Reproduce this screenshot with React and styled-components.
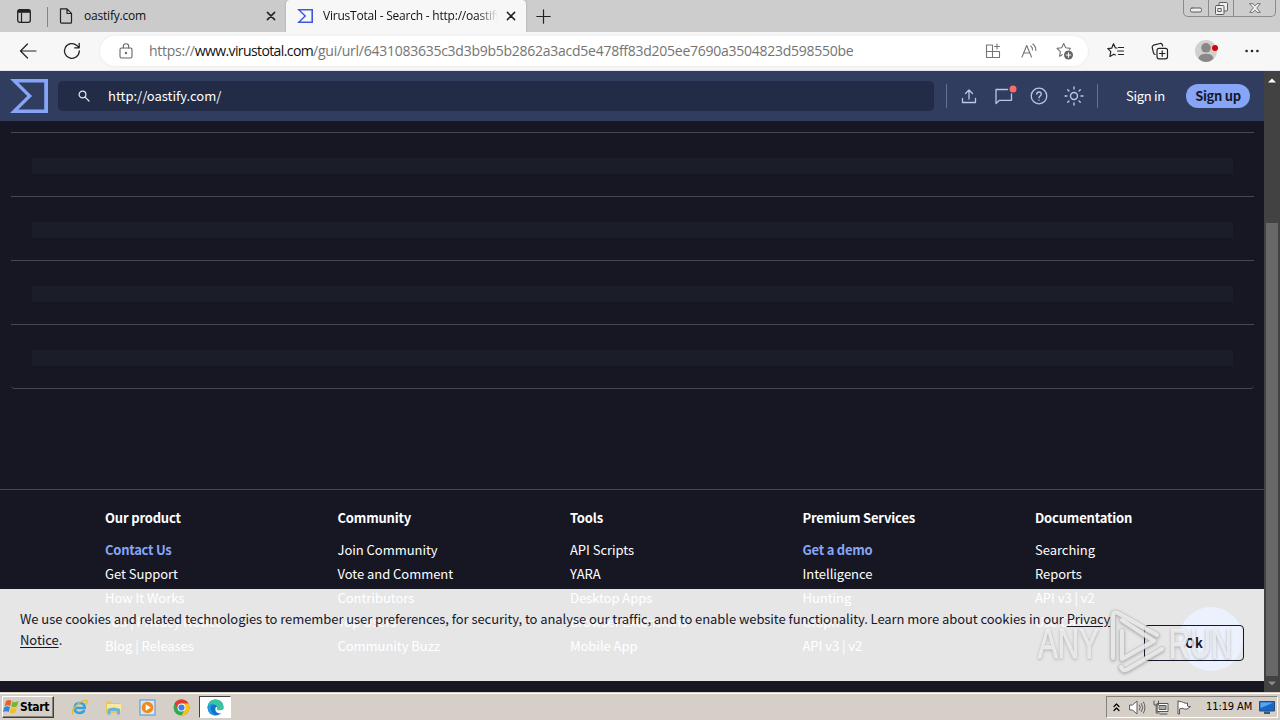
import React from 'react';
import styled, { createGlobalStyle } from 'styled-components';

const uiFont = "'Open Sans', 'Noto Sans', sans-serif";
const pageFont = "'Noto Sans CJK SC', 'Open Sans', sans-serif";
const systemFont = "'DejaVu Sans Condensed', 'DejaVu Sans', sans-serif";

const GlobalStyle = createGlobalStyle`
  * {
    box-sizing: border-box;
  }

  body {
    margin: 0;
    overflow: hidden;
    background-color: #161723;
  }

  svg {
    display: block;
    flex: none;
    overflow: visible;
  }
`;

const Screen = styled.div`
  width: 1280px;
  height: 720px;
  display: flex;
  flex-direction: column;
  overflow: hidden;
`;

/* browser tabs */

const TabStrip = styled.div`
  height: 32px;
  flex: none;
  display: flex;
  align-items: stretch;
  background-color: #cdcdcd;
`;

const TabActions = styled.div`
  width: 48px;
  display: flex;
  align-items: center;
  padding-left: 17px;
`;

const TabDivider = styled.div`
  width: 1px;
  height: 20px;
  margin: 7px 0 0 -1px;
  background-color: #858585;
`;

const Tab = styled.div`
  width: ${(props) => (props.$active ? 240 : 238)}px;
  display: flex;
  align-items: center;
  padding: 0 10px 0 11px;
  background-color: ${(props) => (props.$active ? '#f7f7f7' : '#cbcbcb')};
  border-radius: ${(props) => (props.$active ? '4px 4px 0 0' : '0 0 4px 0')};
  box-shadow: ${(props) => (props.$active ? '0 0 2px #999' : 'none')};
`;

const TabTitle = styled.div`
  flex: 1;
  margin-left: ${(props) => props.$gap}px;
  margin-right: 8px;
  overflow: hidden;
  white-space: nowrap;
  font: 12px/18px ${uiFont};
  letter-spacing: ${(props) => props.$spacing}px;
  color: #111;
  ${(props) => props.$fade && 'mask-image: linear-gradient(to right, #000 88%, transparent);'}
`;

const NewTab = styled.div`
  flex: 1;
  display: flex;
  align-items: center;
  padding-left: 10px;
`;

const WindowControls = styled.div`
  width: 93px;
  height: 17px;
  margin-right: 4px;
  display: flex;
  border: 1px solid #8b8b8b;
  border-top: 0;
  border-radius: 0 0 5px 5px;
`;

const WindowControl = styled.div`
  width: ${(props) => props.$width}px;
  display: flex;
  align-items: center;
  justify-content: center;

  & + & {
    border-left: 1px solid #8b8b8b;
  }
`;

/* address bar */

const Toolbar = styled.div`
  height: 39px;
  flex: none;
  display: flex;
  align-items: center;
  padding: 0 6px;
  background-color: #f7f7f7;
  border-bottom: 1px solid #e1e6ee;
`;

const Slot = styled.div`
  width: ${(props) => props.$width || 44}px;
  flex: none;
  display: flex;
  align-items: center;
  justify-content: center;
`;

const AddressBar = styled.div`
  width: 988px;
  height: 30px;
  margin: 0 6px;
  padding: 0 5px 0 14px;
  display: flex;
  align-items: center;
  border-radius: 15px;
  background-color: #fff;
  box-shadow: 0 0 3px #e6e6e6;
`;

const Url = styled.div`
  flex: 1;
  margin-left: 11px;
  white-space: nowrap;
  font: 14px/20px ${uiFont};
  letter-spacing: -0.26px;
  color: #747474;
`;

const Host = styled.span`
  color: #111;
  letter-spacing: -0.6px;
`;

/* page */

const Viewport = styled.div`
  height: 621px;
  flex: none;
  display: flex;
`;

const Page = styled.div`
  position: relative;
  width: 1264px;
  display: flex;
  flex-direction: column;
  overflow: hidden;
  background-color: #161723;
  font-family: ${pageFont};
`;

const Header = styled.header`
  height: 50px;
  flex: none;
  display: flex;
  align-items: center;
  padding-left: 10px;
  background-color: #313d5f;
`;

const SearchBox = styled.div`
  width: 876px;
  height: 30px;
  margin: 0 12px 0 10px;
  padding-left: 19px;
  display: flex;
  align-items: center;
  gap: 17px;
  border-radius: 5px;
  background-color: #222c46;
  color: #fff;
  font-size: 13px;
  line-height: 20px;
`;

const HeaderDivider = styled.div`
  width: 1px;
  height: 24px;
  background-color: #637298;
`;

const HeaderIcons = styled.div`
  display: flex;
  margin: 0 6px 0 4px;
`;

const SignIn = styled.a`
  width: 60px;
  margin-left: 28px;
  color: #fff;
  font-size: 13px;
  line-height: 24px;
  letter-spacing: -0.3px;
`;

const SignUp = styled.a`
  width: 64px;
  height: 24px;
  border-radius: 12px;
  background-color: #87a5f7;
  color: #15182b;
  font-size: 13px;
  font-weight: 700;
  line-height: 24px;
  letter-spacing: -0.3px;
  text-align: center;
`;

const Rows = styled.div`
  margin: 11px 11px 0;
  width: 1243px;
  border-bottom: 1px solid #454751;
  border-radius: 0 0 4px 4px;
`;

const Row = styled.div`
  height: 64px;
  padding: 25px 21px 0;
  border-top: 1px solid #454751;
`;

const Placeholder = styled.div`
  height: 16px;
  background-color: #1b1d28;
`;

const Footer = styled.footer`
  margin-top: 100px;
  flex: 1;
  display: flex;
  padding: 16px 0 0 105px;
  border-top: 1px solid #454751;
`;

const Column = styled.div`
  width: 232.5px;
  flex: none;
  display: flex;
  flex-direction: column;
  color: #fff;
  font-size: 13px;
  line-height: 24px;
  white-space: nowrap;
`;

const ColumnTitle = styled.h4`
  margin: 0 0 8px;
  font-size: 13px;
  font-weight: 700;
  line-height: 24px;
  letter-spacing: -0.18px;
`;

const FooterLink = styled.a`
  color: ${(props) => (props.$highlight ? '#87a5f7' : '#fff')};
  font-weight: ${(props) => (props.$highlight ? 700 : 400)};
  letter-spacing: ${(props) => (props.$highlight ? '-0.25px' : '-0.04px')};
`;

const ChatBubble = styled.div`
  position: absolute;
  right: 21px;
  bottom: 21px;
  width: 64px;
  height: 64px;
  border-radius: 50%;
  background-color: #5078f0;
`;

const CookieBar = styled.div`
  position: absolute;
  left: 0;
  bottom: 11px;
  width: 1264px;
  height: 92px;
  padding: 19px 20px 20px;
  display: flex;
  justify-content: space-between;
  background-color: rgba(255, 255, 255, 0.895);
`;

const CookieText = styled.p`
  width: 1104px;
  margin: 0;
  color: #15182b;
  font-size: 13px;
  line-height: 21px;
  letter-spacing: -0.066px;

  a {
    text-decoration: underline;
    text-underline-offset: 2px;
  }
`;

const OkButton = styled.button`
  align-self: flex-end;
  width: 100px;
  height: 36px;
  padding: 0;
  border: 1px solid #15182b;
  border-radius: 4px;
  background: transparent;
  color: #15182b;
  font: 700 13px/20px ${pageFont};
`;

const Watermark = styled.svg`
  position: absolute;
  left: 1030px;
  bottom: 14px;
  filter: drop-shadow(0 1px 1.5px rgba(0, 0, 0, 0.3));
`;

const Scrollbar = styled.div`
  width: 16px;
  display: flex;
  flex-direction: column;
  align-items: center;
  justify-content: space-between;
  padding: 7px 0 6px;
  background-color: #424242;
`;

const Thumb = styled.div`
  width: 12px;
  height: 453px;
  margin: auto 0 5px;
  background-color: #686868;
`;

/* taskbar */

const Taskbar = styled.div`
  height: 28px;
  flex: none;
  display: flex;
  align-items: center;
  padding: 1px 2px 0;
  border-top: 1px solid #d6cfc7;
  box-shadow: inset 0 1px 0 #fff;
  background-color: #d6cfc7;
`;

const StartButton = styled.div`
  width: 52px;
  height: 22px;
  display: flex;
  align-items: center;
  border: 1px solid;
  border-color: #fff #404040 #404040 #fff;
  box-shadow: inset -1px -1px 0 #87827c;
  color: #000;
  font: 700 12px/16px ${systemFont};
  letter-spacing: -0.3px;
`;

const Launchers = styled.div`
  display: flex;
  margin-left: 8px;
`;

const ActiveTask = styled.div`
  width: 32px;
  height: 22px;
  margin-left: 1px;
  display: flex;
  align-items: center;
  justify-content: center;
  background-color: #fff;
  border: 1px solid;
  border-color: #404040 #fff #fff #404040;
`;

const Tray = styled.div`
  width: 172px;
  height: 22px;
  margin-left: auto;
  display: flex;
  align-items: center;
  border: 1px solid;
  border-color: #87827c #fff #fff #87827c;
`;

const Clock = styled.div`
  width: 53px;
  margin-left: 9px;
  white-space: nowrap;
  color: #000;
  font: 11px/16px ${systemFont};
  letter-spacing: -0.1px;
`;

const Icon = ({ size = 18, width, height, box = '0 0 18 18', color = '#222', stroke = 1.2, children }) => (
  <svg
    width={width || size}
    height={height || size}
    viewBox={box}
    fill="none"
    stroke={color}
    strokeWidth={stroke}
    strokeLinecap="round"
    strokeLinejoin="round"
  >
    {children}
  </svg>
);

const Sigma = ({ width, height, color }) => (
  <svg width={width} height={height} viewBox="0 0 100 89" preserveAspectRatio="none" fill={color}>
    <path d="M45.3 44.5 0 89h100V0H0zM90 80H22l36-35.2L22 9h68z" />
  </svg>
);

const CloseIcon = () => (
  <Icon size={10} box="0 0 10 10" stroke={1.5}>
    <path d="M1.4 1.4l7.2 7.2M8.6 1.4 1.4 8.6" />
  </Icon>
);

const footerColumns = [
  {
    title: 'Our product',
    links: ['Contact Us', 'Get Support', 'How It Works', 'ToS | Privacy Notice', 'Blog | Releases'],
    highlight: 'Contact Us',
  },
  {
    title: 'Community',
    links: ['Join Community', 'Vote and Comment', 'Contributors', 'Top Users', 'Community Buzz'],
  },
  {
    title: 'Tools',
    links: ['API Scripts', 'YARA', 'Desktop Apps', 'Browser Extensions', 'Mobile App'],
  },
  {
    title: 'Premium Services',
    links: ['Get a demo', 'Intelligence', 'Hunting', 'Graph', 'API v3 | v2'],
    highlight: 'Get a demo',
  },
  {
    title: 'Documentation',
    links: ['Searching', 'Reports', 'API v3 | v2', 'Use Cases'],
  },
];

const Tabs = () => (
  <TabStrip>
    <TabActions>
      <Icon size={14} box="0 0 14 14" stroke={1.3}>
        <rect x="0.7" y="0.7" width="12.6" height="12.6" rx="2" />
        <path d="M1 2.3h12" strokeWidth="3" strokeLinecap="butt" />
        <path d="M4.500 4v9" strokeWidth="1.200" />
      </Icon>
    </TabActions>
    <TabDivider />
    <Tab>
      <Icon width={14} height={16} box="0 0 14 16" stroke={1.2}>
        <path d="M1.500 .8h6.500l4.500 4.500V14.200a1 1 0 0 1-1 1H2.500a1 1 0 0 1-1-1zM8 1v4.500h4.500" />
      </Icon>
      <TabTitle $gap={11} $spacing={-0.2}>oastify.com</TabTitle>
      <CloseIcon />
    </Tab>
    <Tab $active>
      <Sigma width={16} height={14} color="#3d5bd9" />
      <TabTitle $gap={10} $spacing={-0.22} $fade>VirusTotal - Search - http://oastify.com/</TabTitle>
      <CloseIcon />
    </Tab>
    <NewTab>
      <Icon size={15} box="0 0 15 15">
        <path d="M7.500 .8v13.400M.8 7.500h13.400" />
      </Icon>
    </NewTab>
    <WindowControls>
      <WindowControl $width={24}>
        <Icon width={12} height={5} box="0 0 12 5" color="#5d5d5d" stroke={1}>
          <rect x="0.500" y="2" width="11" height="4" rx="1.500" fill="#eee" />
        </Icon>
      </WindowControl>
      <WindowControl $width={25}>
        <Icon size={13} box="0 0 13 13" color="#5d5d5d" stroke={1}>
          <rect x="4" y="0.500" width="8.500" height="8.500" rx="1" fill="#eee" />
          <rect x="0.500" y="3.500" width="8.500" height="9" rx="1" fill="#eee" />
          <rect x="3.200" y="6.500" width="3" height="3" />
        </Icon>
      </WindowControl>
      <WindowControl $width={42}>
        <Icon width={12} height={10} box="0 0 13 11" color="#5d5d5d" stroke={0.9}>
          <path d="M.7.700h3.500l2.300 2.500L8.800.700h3.500L8.500 5.500l3.800 4.800H8.800L6.500 7.800l-2.300 2.500H.7l3.800-4.800z" fill="#eee" />
        </Icon>
      </WindowControl>
    </WindowControls>
  </TabStrip>
);

const AddressToolbar = () => (
  <Toolbar>
    <Slot>
      <Icon>
        <path d="M17 9H1.500M8.500 2 1.500 9l7 7" />
      </Icon>
    </Slot>
    <Slot>
      <Icon stroke={1.3}>
        <path d="M16.300 9A7.400 7.400 0 1 1 13.800 3.400L16 5.600M16.200 1.300v4.500h-4.500" />
      </Icon>
    </Slot>
    <AddressBar>
      <Slot $width={24}>
        <Icon width={14} height={16} box="0 0 14 16" color="#666" stroke={1.1}>
          <rect x="1" y="5" width="12" height="10" rx="1.500" />
          <path d="M4.300 5V3.500a2.700 2.700 0 0 1 5.400 0V5" />
          <circle cx="7" cy="10" r="0.600" fill="#666" />
        </Icon>
      </Slot>
      <Url>
        https://<Host>www.virustotal.com</Host>/gui/url/6431083635c3d3b9b5b2862a3acd5e478ff83d205ee7690a3504823d598550be
      </Url>
      <Slot $width={36}>
        <Icon size={16} box="0 0 16 16" color="#757575" stroke={1.1}>
          <path d="M7.500 2H1.500v12.500h13V8.500M7.500 2v12.500M1.500 8.500h13M12 1v5M9.500 3.500h5" />
        </Icon>
      </Slot>
      <Slot $width={36}>
        <Icon size={16} box="0 0 16 16" color="#757575" stroke={1.1}>
          <path d="M1 14 5.700 2.500 10.500 14M2.800 10h6M9.800 3q2 1.500 1.700 4M11.800 1q3.300 2.500 3 6.500" />
        </Icon>
      </Slot>
      <Slot $width={36}>
        <Icon color="#757575" stroke={1.1}>
          <path d="M6.200 12.700 3.500 14.300l.9-4.700L1 6.400l4.700-.6 2-4.300 2 4.300 4.700.6-1 1" />
          <circle cx="12.500" cy="13" r="4.500" fill="#666" stroke="none" />
          <path d="M12.500 10.800v4.400M10.300 13h4.400" stroke="#fff" />
        </Icon>
      </Slot>
    </AddressBar>
    <Slot>
      <Icon>
        <path d="M10 6 8.300 5.800 6.500 1.800 4.700 6.200.8 6.600l3 3-.9 4.900 3.900-2.300 1.500.8M11.500 5.500h5M10.500 9h6M11.500 12.500h5" />
      </Icon>
    </Slot>
    <Slot>
      <Icon>
        <rect x="6" y="6.300" width="10.500" height="10.500" rx="2" />
        <path d="M11.200 8.800v5.500M8.500 11.500H14M4 12.500Q2.800 12 2.500 10.800L1.200 5.500Q1 3.800 2.500 3.200L9 1.500q1.600-.2 2.200 1l.5 1.500" />
      </Icon>
    </Slot>
    <Slot $width={48}>
      <Icon size={24} box="0 0 24 24" stroke={0}>
        <circle cx="12" cy="12" r="11" fill="#d2d0ce" />
        <circle cx="12" cy="8.800" r="4.800" fill="#8a8886" />
        <path d="M4.500 19.500Q5 14.800 12 14.800t7.500 4.700Q16 23 12 23t-7.500-3.500z" fill="#8a8886" />
        <circle cx="21" cy="9" r="3" fill="#d8000c" />
      </Icon>
    </Slot>
    <Slot>
      <Icon width={14} height={4} box="0 0 14 4" stroke={0}>
        <circle cx="1.600" cy="2" r="1.300" fill="#222" />
        <circle cx="7" cy="2" r="1.300" fill="#222" />
        <circle cx="12.400" cy="2" r="1.300" fill="#222" />
      </Icon>
    </Slot>
  </Toolbar>
);

const PageHeader = () => (
  <Header>
    <Sigma width={38} height={34} color="#87a5f7" />
    <SearchBox>
      <Icon size={14} box="0 0 14 14" color="#e4e8f2">
        <circle cx="5.500" cy="5.500" r="3.400" />
        <path d="M8.100 8.100 12 12" />
      </Icon>
      http://oastify.com/
    </SearchBox>
    <HeaderDivider />
    <HeaderIcons>
      <Slot $width={35}>
        <Icon size={16} box="0 0 16 16" color="#b7c6ee" stroke={1.3}>
          <path d="M1.500 10.500v4h13v-4M8 11V2M4.500 5.500 8 2l3.500 3.500" />
        </Icon>
      </Slot>
      <Slot $width={35}>
        <Icon width={22} height={22} box="0 0 22 22" color="#b7c6ee" stroke={1.3}>
          <path d="M14.500 4.500H3v14l3.500-3.200H18.500V9" />
          <circle cx="20" cy="4" r="3.500" fill="#ff6b6b" stroke="none" />
        </Icon>
      </Slot>
      <Slot $width={35}>
        <Icon color="#b7c6ee" stroke={1.3}>
          <circle cx="9" cy="9" r="7.800" />
          <path d="M6.700 7.200Q6.800 5 9 5t2.300 2.100Q11.300 8.300 10 9.100T9 10.900M9 13.200v.1" />
        </Icon>
      </Slot>
      <Slot $width={35}>
        <Icon size={20} box="0 0 20 20" color="#b7c6ee" stroke={1.4}>
          <circle cx="10" cy="10" r="3.500" />
          <path d="M10 1v2M10 17v2M1 10h2M17 10h2M3.700 3.700l1.300 1.300M15 15l1.300 1.300M3.700 16.300 5 15M15 5l1.300-1.300" />
        </Icon>
      </Slot>
    </HeaderIcons>
    <HeaderDivider />
    <SignIn>Sign in</SignIn>
    <SignUp>Sign up</SignUp>
  </Header>
);

const markPath = 'M83 50V8q0-5 5-3l39 22M92 23v28l32-18-32-21M91 59q2 5 7 2l34-20';

const AnyRunMark = () => (
  <Watermark width="210" height="70" viewBox="0 0 210 70">
    <g
      fill="#f4f4f4"
      fillOpacity="0.75"
      stroke="#f4f4f4"
      strokeOpacity="0.6"
      strokeWidth="1"
      fontSize="43"
      fontFamily="'Liberation Sans Narrow', 'Liberation Sans', sans-serif"
    >
      <text x="8" y="50" textLength="61" lengthAdjust="spacingAndGlyphs">ANY</text>
      <text x="139" y="50" textLength="63" lengthAdjust="spacingAndGlyphs">RUN</text>
    </g>
    <g fill="none" strokeLinejoin="round" strokeLinecap="round">
      <path d={markPath} stroke="#c4c4c4" strokeOpacity="0.5" strokeWidth="6" />
      <path d={markPath} stroke="#f2f2f2" strokeOpacity="0.8" strokeWidth="4" />
    </g>
  </Watermark>
);

const WindowsFlag = () => (
  <svg width="17" height="16" viewBox="0 0 17 16">
    <path d="M3 2q3-2 5.500 0L7.200 7Q4.500 5.500 1.700 7z" fill="#e8602c" />
    <path d="M9.500 2.500q3 1.500 6-.5L14 7.200q-3 1.800-5.800.3z" fill="#79b52d" />
    <path d="M1.400 8Q4.500 6.500 7 8l-1.300 5Q3 11.500 0 13z" fill="#3b84d1" />
    <path d="M8 8.700q3 1.500 5.800-.3l-1.500 5q-3 1.600-5.600.1z" fill="#f5bd25" />
  </svg>
);

const TaskbarIcons = () => (
  <Launchers>
    <Slot $width={34}>
      <svg width="17" height="17" viewBox="0 0 17 17" fill="none">
        <path d="M3.700 9h10Q13.700 4 8.800 4T3.600 9.200q.2 4.600 5 4.800 3.400 0 4.800-2.800" stroke="#36a3df" strokeWidth="2.600" />
        <path d="M2 15.500Q-.5 13 5 7T15.800 1.500q1 1.200-1 4" stroke="#e9b92d" strokeWidth="1.300" />
      </svg>
    </Slot>
    <Slot $width={34}>
      <svg width="17" height="17" viewBox="0 0 17 17">
        <path d="M1 2.500h5L7.500 4H15v10H1z" fill="#e8c55d" />
        <path d="M2 5h14v7H2z" fill="#f8e79c" />
        <path d="M2.500 15.500V10Q8.500 7 15 10v5.500h-3V12H5.500v3.500z" fill="#65b5dc" />
      </svg>
    </Slot>
    <Slot $width={34}>
      <svg width="17" height="17" viewBox="0 0 17 17">
        <rect x="1" y="1" width="15" height="15" fill="#d6e7f5" stroke="#5c91c2" />
        <circle cx="8.500" cy="8.500" r="5.800" fill="#f28a1b" />
        <path d="M6.700 5.200v6.600l5.200-3.300z" fill="#fff" />
      </svg>
    </Slot>
    <Slot $width={34}>
      <svg width="17" height="17" viewBox="0 0 17 17">
        <circle cx="8.500" cy="8.500" r="8" fill="#35a852" />
        <path d="M1.570 4.500A8 8 0 0 1 15.430 4.500H8.500L5 10.500z" fill="#e33b2e" />
        <path d="M15.430 4.500A8 8 0 0 1 8.500 16.500L12 10.500 8.500 4.500z" fill="#fbc116" />
        <circle cx="8.500" cy="8.500" r="4" fill="#fff" />
        <circle cx="8.500" cy="8.500" r="3.100" fill="#3f7fe8" />
      </svg>
    </Slot>
  </Launchers>
);

const SystemTray = () => (
  <Tray>
    <Slot $width={18}>
      <Icon width={7} height={9} box="0 0 7 9" color="#000" stroke={1.2}>
        <path d="M1 3.500l2.500-2.500L6 3.500M1 7.500 3.500 5 6 7.500" />
      </Icon>
    </Slot>
    <Slot $width={24}>
      <Icon width={17} height={15} box="0 0 17 15" color="#5d5d5d" stroke={1}>
        <path d="M1 5h2.500L8 1v13L3.500 10H1z" fill="#fff" />
        <path d="M10.500 5q1.500 2.500 0 5M12.500 3.500q2.500 4 0 8M14.500 2q3 5.500 0 11" />
      </Icon>
    </Slot>
    <Slot $width={24}>
      <Icon width={16} height={15} box="0 0 16 15" color="#555" stroke={1}>
        <rect x="4.500" y="3.500" width="10.500" height="8" fill="#fff" />
        <rect x="6.500" y="5.500" width="6.500" height="4" fill="#aaa" />
        <path d="M7 14h7M1 1v4h4.500V1M3.200 5v8h3" />
      </Icon>
    </Slot>
    <Slot $width={24}>
      <Icon width={16} height={15} box="0 0 16 15" color="#555" stroke={1}>
        <path d="M1 1v13h1.500V9q3-1.500 5 0t6-2.500q-2 .5-3-.5V3q-2 .8-4-.5T2.500 1.500z" fill="#fff" />
      </Icon>
    </Slot>
    <Clock>11:19 AM</Clock>
    <svg width="16" height="15" viewBox="0 0 16 15">
      <path d="M.5 1.500h15v9.500H.5z" fill="#1866c8" stroke="#275078" />
      <path d="M1.500 2.500h13L1.500 8z" fill="#5ba4ee" />
      <path d="M5 11.500h6v2.500H5z" fill="#39587a" />
    </svg>
  </Tray>
);

const EdgeLogo = () => (
  <svg width="17" height="17" viewBox="0 0 17 17">
    <circle cx="8.500" cy="8.500" r="8" fill="#1673c4" />
    <path d="M.6 7.500Q1.800.5 8.500.5q7 .3 8 6.500.3 4-4 4.300-3 0-2.500-1.800Q10.800 6 7 5.500 3 5 .6 7.500z" fill="#39c5a2" />
    <path d="M.6 7.500Q3 4 7 5q-3.500 1.500-3.200 5 .4 4 4.700 6.400Q.5 16 .6 7.500z" fill="#1e9be6" />
    <path d="M10 9.500q-.5 1.800 2.500 1.800 2.500 0 4-1.600l1 5-2-.7q-3.500 1-5.500-.6T8.300 9.500Q8.500 8 10 7.800z" fill="#fff" />
  </svg>
);

const App = () => {
  return (
    <Screen>
      <GlobalStyle />
      <Tabs />
      <AddressToolbar />
      <Viewport>
        <Page>
          <PageHeader />
          <Rows>
            {[1, 2, 3, 4].map((row) => (
              <Row key={row}>
                <Placeholder />
              </Row>
            ))}
          </Rows>
          <Footer>
            {footerColumns.map((column) => (
              <Column key={column.title}>
                <ColumnTitle>{column.title}</ColumnTitle>
                {column.links.map((link) => (
                  <FooterLink key={link} $highlight={link === column.highlight}>
                    {link}
                  </FooterLink>
                ))}
              </Column>
            ))}
          </Footer>
          <ChatBubble />
          <CookieBar>
            <CookieText>
              We use cookies and related technologies to remember user preferences, for security, to analyse our
              traffic, and to enable website functionality. Learn more about cookies in our <a>Privacy Notice</a>.
            </CookieText>
            <OkButton>Ok</OkButton>
          </CookieBar>
          <AnyRunMark />
        </Page>
        <Scrollbar>
          <svg width="8" height="5" viewBox="0 0 8 5">
            <path d="M0 4.500 4 .5l4 4z" fill="#fff" />
          </svg>
          <Thumb />
          <svg width="8" height="5" viewBox="0 0 8 5">
            <path d="M0 .5 4 4.500l4-4z" fill="#8c8c8c" />
          </svg>
        </Scrollbar>
      </Viewport>
      <Taskbar>
        <StartButton>
          <WindowsFlag />
          Start
        </StartButton>
        <TaskbarIcons />
        <ActiveTask>
          <EdgeLogo />
        </ActiveTask>
        <SystemTray />
      </Taskbar>
    </Screen>
  );
};

export default App;
